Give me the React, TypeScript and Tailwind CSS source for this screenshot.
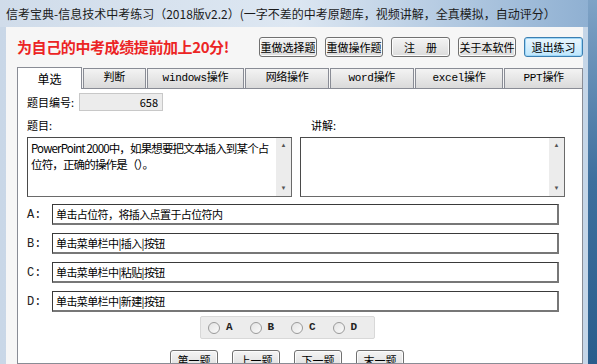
import React from 'react';

const ui = { fontFamily: '"Liberation Mono", "Noto Sans CJK SC", monospace' };
const cjk = { fontFamily: '"Noto Sans CJK SC", "Liberation Sans", sans-serif' };

const WinButton: React.FC<{ label: string; w: string; focused?: boolean }> = ({ label, w, focused }) => (
  <div
    className={`${w} flex items-center justify-center whitespace-nowrap rounded-[3px] border text-[11px] text-black ${
      focused
        ? 'border-[#3c7fb1] bg-gradient-to-b from-[#eaf6fd] to-[#bee6fd] shadow-[inset_0_0_0_1px_#9ed6f7]'
        : 'border-[#707070] bg-gradient-to-b from-[#f4f4f4] to-[#dcdcdc] shadow-[inset_0_0_0_1px_#fcfcfc]'
    }`}
    style={cjk}
  >
    {label}
  </div>
);

const tabs = [
  { label: '单选', w: 'w-[65px]' },
  { label: '判断', w: 'w-[63px]' },
  { label: 'windows操作', w: 'w-[98px]' },
  { label: '网络操作', w: 'w-[84px]' },
  { label: 'word操作', w: 'w-[84px]' },
  { label: 'excel操作', w: 'w-[89px]' },
  { label: 'PPT操作', w: 'w-[79px]' },
];

const options = [
  { key: 'A', text: '单击占位符，将插入点置于占位符内' },
  { key: 'B', text: '单击菜单栏中|插入|按钮' },
  { key: 'C', text: '单击菜单栏中|粘贴|按钮' },
  { key: 'D', text: '单击菜单栏中|新建|按钮' },
];

const TextBox: React.FC<{ text?: string }> = ({ text }) => (
  <div className="w-[265px] h-[60px] flex border border-[#4a4a4a] border-r-[#6a6a6a] border-b-[#6a6a6a] bg-white">
    <div className="flex-1 pl-[3px] pr-[1px] pt-[2px] text-[11.5px] leading-[16px] tracking-[-0.85px] text-black" style={cjk}>
      {text}
    </div>
    <div className="w-[15px] bg-[#ececec] flex flex-col justify-between items-center py-[3px] text-[6px] text-[#555]">
      <span>▲</span>
      <span>▼</span>
    </div>
  </div>
);

const Radio: React.FC<{ label: string }> = ({ label }) => (
  <div className="flex items-center gap-[6px] w-[47px]">
    <div className="w-[12px] h-[12px] rounded-full border border-[#9a9a9a] bg-gradient-to-br from-[#e4e4e4] to-[#fafafa]" />
    <span className="text-[11px] font-bold text-[#222]" style={ui}>
      {label}
    </span>
  </div>
);

export default function App() {
  return (
    <div className="w-[597px] h-[364px] overflow-hidden flex bg-[#2e6393]">
      {/* window */}
      <div className="w-[588px] h-full flex flex-col bg-gradient-to-r from-[#c9d7e7] via-[#d6e2ef] to-[#c5d6e8]">
        <div className="h-[27px] shrink-0 flex items-center pl-[6px] bg-gradient-to-r from-[#d0dcea] via-[#dde7f2] to-[#8fb0d2]">
          <span className="text-[12px] text-[#1a1a1a] whitespace-nowrap" style={cjk}>
            信考宝典-信息技术中考练习（2018版v2.2）(一字不差的中考原题库，视频讲解，全真模拟，自动评分）
          </span>
        </div>
        <div className="ml-[6px] w-[577px] flex-1 min-h-0 flex flex-col bg-[#f6f6f6] pl-[11px]">
          {/* header */}
          <div className="h-[39px] shrink-0 flex items-start pt-[9px]">
            <div className="w-[247px] whitespace-nowrap text-[15px] leading-[22px] tracking-[-0.4px] font-bold text-[#ec2424]" style={cjk}>
              为自己的中考成绩提前加上20分!
            </div>
            <div className="flex items-start gap-[8px] pt-[1px]">
              <WinButton label="重做选择题" w="w-[58px] h-[20px]" />
              <WinButton label="重做操作题" w="w-[58px] h-[20px]" />
              <WinButton label="注　册" w="w-[59px] h-[20px]" />
              <WinButton label="关于本软件" w="w-[58px] h-[20px]" />
              <WinButton label="退出练习" w="w-[59px] h-[20px]" focused />
            </div>
          </div>

          {/* tab strip */}
          <div className="h-[22px] shrink-0 flex items-end">
            {tabs.map((t, i) =>
              i === 0 ? (
                <div
                  key={t.label}
                  className={`${t.w} h-[22px] -mb-px z-10 flex items-center justify-center whitespace-nowrap border border-b-0 border-[#898c95] bg-white text-[12px] text-black`}
                  style={cjk}
                >
                  {t.label}
                </div>
              ) : (
                <div
                  key={t.label}
                  className={`${t.w} h-[20px] ml-px flex items-center justify-center whitespace-nowrap border border-b-0 border-[#898c95] bg-gradient-to-b from-[#f3f3f3] to-[#dadada] text-[11px] tracking-[-0.3px] text-black`}
                  style={ui}
                >
                  {t.label}
                </div>
              )
            )}
          </div>

          {/* panel */}
          <div className="w-[566px] flex-1 min-h-0 overflow-hidden border border-[#898c95] bg-white pl-[9px] pt-[4px]">
            <div className="flex items-center h-[18px]">
              <span className="w-[52px] whitespace-nowrap text-[11px] text-black" style={cjk}>
                题目编号:
              </span>
              <div
                className="w-[84px] h-[18px] flex items-center justify-end pr-[4px] bg-[#ececec] border border-[#c8c8c8] text-[11px] text-black"
                style={cjk}
              >
                658
              </div>
            </div>

            <div className="flex h-[21px] items-end mt-[1px]">
              <span className="w-[284px] text-[11px] text-black" style={cjk}>
                题目:
              </span>
              <span className="text-[11px] text-black" style={cjk}>
                讲解:
              </span>
            </div>

            <div className="flex gap-[8px] mt-[4px]">
              <TextBox text="PowerPoint 2000中，如果想要把文本插入到某个占位符，正确的操作是（）。" />
              <TextBox />
            </div>

            <div className="flex flex-col gap-[8px] mt-[7px]">
              {options.map((o) => (
                <div key={o.key} className="flex items-center h-[21px]">
                  <span className="w-[25px] text-[12px] text-[#222]" style={ui}>
                    {o.key}:
                  </span>
                  <div
                    className="w-[507px] h-[21px] flex items-center pl-[3px] bg-white border border-[#3a3a3a] border-r-2 border-b-2 border-r-[#777] border-b-[#777] text-[11px] tracking-[-0.6px] text-black"
                    style={cjk}
                  >
                    {o.text}
                  </div>
                </div>
              ))}
            </div>

            <div className="ml-[173px] mt-[4px] w-[175px] h-[23px] flex items-center pl-[7px] bg-[#ececec] border border-[#d8d8d8] rounded-[2px]">
              <Radio label="A" />
              <Radio label="B" />
              <Radio label="C" />
              <Radio label="D" />
            </div>

            <div className="ml-[143px] mt-[11px] flex gap-[14px]">
              <WinButton label="第一题" w="w-[48px] h-[20px]" />
              <WinButton label="上一题" w="w-[48px] h-[20px]" />
              <WinButton label="下一题" w="w-[48px] h-[20px]" />
              <WinButton label="末一题" w="w-[48px] h-[20px]" />
            </div>
          </div>
        </div>
      </div>
      <div className="flex-1 bg-gradient-to-b from-[#7fa3c6] via-[#3e6f9d] to-[#2a5d8c]" />
    </div>
  );
}
